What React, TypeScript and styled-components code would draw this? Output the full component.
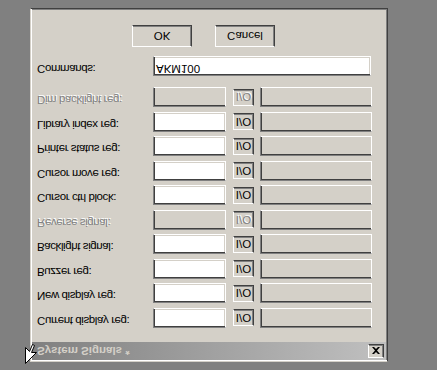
import React from "react";
import styled, { createGlobalStyle, css } from "styled-components";

const GlobalStyle = createGlobalStyle`
  html, body { margin: 0; padding: 0; background: #808080; }
  * { box-sizing: border-box; }
`;

const Screen = styled.div`
  position: relative;
  width: 437px;
  height: 370px;
  overflow: hidden;
  background: #808080;
  padding: 8px 0 0 30px;
  transform: scaleY(-1);
  font-family: "Liberation Sans", Arial, sans-serif;
  font-size: 11.5px;
  letter-spacing: -0.4px;
`;

const Window = styled.div`
  width: 358px;
  height: 354px;
  background: #d4d0c8;
  border: 1px solid;
  border-color: #d4d0c8 #404040 #404040 #d4d0c8;
  box-shadow: inset 1px 1px #ffffff, inset -1px -1px #808080;
  padding: 1px;
  display: flex;
  flex-direction: column;
`;

const TitleBar = styled.div`
  height: 18px;
  display: flex;
  align-items: center;
  justify-content: space-between;
  padding: 0 2px 0 5px;
  background: linear-gradient(to right, #808080, #c0c0c0);
`;

const Title = styled.span`
  color: #d4d0c8;
  font-weight: bold;
  font-size: 11.5px;
  letter-spacing: 0;
`;

const CloseButton = styled.div`
  width: 16px;
  height: 14px;
  background: #d4d0c8;
  border: 1px solid;
  border-color: #ffffff #404040 #404040 #ffffff;
  box-shadow: inset -1px -1px #808080;
  display: flex;
  align-items: center;
  justify-content: center;
`;

const Body = styled.div`
  padding: 14px 0 0 5px;
  display: flex;
  flex-direction: column;
`;

const Rows = styled.div`
  display: flex;
  flex-direction: column;
  gap: 4.5px;
`;

const Row = styled.div<{ $top?: number }>`
  display: flex;
  align-items: center;
  height: 20px;
  margin-top: ${(p) => p.$top ?? 0}px;
`;

const Label = styled.span<{ $disabled?: boolean }>`
  width: 116px;
  flex: none;
  align-self: flex-start;
  line-height: 13px;
  padding-top: 1px;
  color: #000;
  white-space: nowrap;
  ${(p) =>
    p.$disabled &&
    css`
      color: #808080;
      text-shadow: 1px 1px #ffffff;
    `}
`;

const Field = styled.div<{ $width: number; $white?: boolean }>`
  width: ${(p) => p.$width}px;
  height: 20px;
  flex: none;
  background: ${(p) => (p.$white ? "#ffffff" : "#d4d0c8")};
  border: 1px solid;
  border-color: #808080 #ffffff #ffffff #808080;
  box-shadow: inset 1px 1px #404040, inset -1px -1px #d4d0c8;
  padding: 0 2px;
  line-height: 13px;
  color: #000;
  letter-spacing: 0;
`;

const IoButton = styled.div<{ $disabled?: boolean }>`
  width: 21px;
  height: 17px;
  flex: none;
  margin: 0 6px 0 7px;
  background: #d4d0c8;
  border: 1px solid;
  border-color: #ffffff #404040 #404040 #ffffff;
  box-shadow: inset -1px -1px #808080;
  display: flex;
  align-items: center;
  justify-content: center;
  color: #000;
  letter-spacing: 0;
  ${(p) =>
    p.$disabled &&
    css`
      color: #808080;
      text-shadow: 1px 1px #ffffff;
    `}
`;

const ButtonBar = styled.div`
  display: flex;
  gap: 23px;
  margin-top: 9px;
  padding-left: 95px;
`;

const PushButton = styled.div`
  width: 60px;
  height: 22px;
  background: #d4d0c8;
  border: 1px solid;
  border-color: #ffffff #404040 #404040 #ffffff;
  box-shadow: inset -1px -1px #808080;
  display: flex;
  align-items: center;
  justify-content: center;
  color: #000;
  letter-spacing: 0;
`;

const Cursor = styled.svg`
  position: absolute;
  left: 25px;
  top: 6px;
`;

const rows: { label: string; disabled?: boolean }[] = [
  { label: "Current display reg:" },
  { label: "New display reg:" },
  { label: "Buzzer reg:" },
  { label: "Backlight signal:" },
  { label: "Reverse signal:", disabled: true },
  { label: "Cursor ctrl block:" },
  { label: "Cursor move reg:" },
  { label: "Printer status reg:" },
  { label: "Library index reg:" },
  { label: "Dim backlight reg:", disabled: true },
];

export default function App() {
  return (
    <>
      <GlobalStyle />
      <Screen>
        <Window>
          <TitleBar>
            <Title>System Signals *</Title>
            <CloseButton>
              <svg width="8" height="7" viewBox="0 0 8 7">
                <path d="M0 0h2l2 2 2-2h2L5 3.5 8 7H6L4 5 2 7H0l3-3.5z" fill="#000" />
              </svg>
            </CloseButton>
          </TitleBar>
          <Body>
            <Rows>
              {rows.map((r) => (
                <Row key={r.label}>
                  <Label $disabled={r.disabled}>{r.label}</Label>
                  <Field $width={73} $white={!r.disabled} />
                  <IoButton $disabled={r.disabled}>I/O</IoButton>
                  <Field $width={112} />
                </Row>
              ))}
            </Rows>
            <Row $top={11}>
              <Label>Commands:</Label>
              <Field $width={218} $white>
                AKM100
              </Field>
            </Row>
            <ButtonBar>
              <PushButton>OK</PushButton>
              <PushButton>Cancel</PushButton>
            </ButtonBar>
          </Body>
        </Window>
        <Cursor width="13" height="21" viewBox="0 0 13 21">
          <path
            d="M0.5 0.5 L0.5 16.5 L4.5 12.5 L7.5 19.5 L9.5 18.5 L6.5 11.5 L11.5 11.5 Z"
            fill="#ffffff"
            stroke="#000000"
            strokeWidth="1"
          />
        </Cursor>
      </Screen>
    </>
  );
}
